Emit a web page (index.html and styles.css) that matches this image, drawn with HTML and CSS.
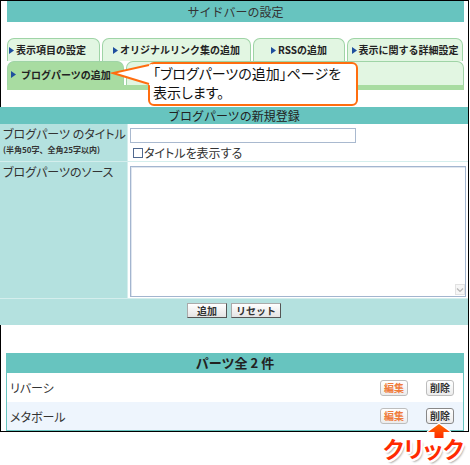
FILE: index.html
```html
<!DOCTYPE html>
<html lang="ja">
<head>
<meta charset="utf-8">
<title>サイドバーの設定</title>
<link rel="stylesheet" href="styles.css">
</head>
<body>
<div class="frame">
  <div class="top">
    <div class="hdr">サイドバーの設定</div>
    <div class="tabs">
      <div class="tabrow">
        <div class="tab w1"><svg class="tri" width="5" height="7" viewBox="0 0 5 7"><polygon points="0,0 5,3.5 0,7" fill="#1f4f9e"/></svg>表示項目の設定</div>
        <div class="tab w2"><svg class="tri" width="5" height="7" viewBox="0 0 5 7"><polygon points="0,0 5,3.5 0,7" fill="#1f4f9e"/></svg>オリジナルリンク集の追加</div>
        <div class="tab w3"><svg class="tri" width="5" height="7" viewBox="0 0 5 7"><polygon points="0,0 5,3.5 0,7" fill="#1f4f9e"/></svg>RSSの追加</div>
        <div class="tab w4"><svg class="tri" width="5" height="7" viewBox="0 0 5 7"><polygon points="0,0 5,3.5 0,7" fill="#1f4f9e"/></svg>表示に関する詳細設定</div>
      </div>
      <div class="tabrow row2">
        <div class="tab active"><svg class="tri wide" width="5" height="7" viewBox="0 0 5 7"><polygon points="0,0 5,3.5 0,7" fill="#1f4f9e"/></svg>ブログパーツの追加</div>
        <div class="tab fill"></div>
      </div>
      <div class="strip"></div>
    </div>
  </div>

  <div class="form">
    <div class="fhdr">ブログパーツの新規登録</div>
    <div class="fgrid">
      <div class="lbl">ブログパーツ のタイトル<div class="sub">(半角50字、全角25字以内)</div></div>
      <div class="val">
        <div class="inp"></div>
        <div class="chk"><span class="box"></span>タイトルを表示する</div>
      </div>
      <div class="lbl">ブログパーツのソース</div>
      <div class="val">
        <div class="ta"><div class="sc"><svg width="8" height="6" viewBox="0 0 8 6"><polyline points="1,1.5 4,4.5 7,1.5" fill="none" stroke="#b5b5b5" stroke-width="1.2"/></svg></div></div>
      </div>
    </div>
    <div class="btnrow">
      <div class="btn b1">追加</div>
      <div class="btn b2">リセット</div>
    </div>
  </div>

  <div class="parts">
    <div class="phdr">パーツ全 2 件</div>
    <div class="prow">
      <div class="name">リバーシ</div>
      <div class="sbtn edit">編集</div>
      <div class="sbtn">削除</div>
    </div>
    <div class="prow alt">
      <div class="name">メタボール</div>
      <div class="sbtn edit">編集</div>
      <div class="sbtn hot">削除</div>
    </div>
  </div>
</div>

<div class="callout">「ブログパーツの追加」ページを<br>表示します。</div>
<svg class="tail" width="44" height="30" viewBox="0 0 44 30">
  <polygon points="3,13 42,4 42,26" fill="#fff"/>
  <polyline points="39,5 3,13 39,24" fill="none" stroke="#ff6d0f" stroke-width="2" stroke-linejoin="miter"/>
</svg>

<svg class="arrow" width="26" height="18" viewBox="0 0 26 18">
  <defs>
    <linearGradient id="ag" x1="0" y1="0" x2="0" y2="1">
      <stop offset="0" stop-color="#ff6a00"/>
      <stop offset="1" stop-color="#ff2a00"/>
    </linearGradient>
  </defs>
  <polygon points="13,2 24,10 17.5,10 17.5,16 8.5,16 8.5,10 2,10" fill="url(#ag)" stroke="#fff" stroke-width="2.5" stroke-linejoin="round" paint-order="stroke"/>
</svg>
<div class="click">クリック</div>
</body>
</html>
```
FILE: styles.css
```css
body {
  margin: 0;
  width: 470px;
  height: 465px;
  position: relative;
  background: #fff;
  font-family: "Noto Sans CJK JP", "Noto Sans", sans-serif;
  color: #333;
}

.frame {
  width: 467px;
  height: 430px;
  border: 1px solid #000;
}

.top {
  padding: 0 4px 0 6px;
}

.hdr {
  height: 21px;
  line-height: 21px;
  background: #67c4bf;
  text-align: center;
  font-size: 12px;
  color: #333;
}

.tabs {
  margin-top: 16px;
}

.tabrow {
  display: flex;
  gap: 2px;
  height: 23px;
}

.tab {
  box-sizing: border-box;
  border: 1px solid #9fd4a6;
  border-bottom: none;
  border-radius: 7px 7px 0 0;
  background: #e2f6e2;
  display: flex;
  align-items: center;
  justify-content: center;
  font-size: 10px;
  font-weight: bold;
  line-height: 14px;
  color: #222;
  white-space: nowrap;
}

.tri {
  margin-right: 2px;
  flex: none;
}

.tri.wide {
  margin: 3px 5px 0 0;
}

.w1 {
  width: 93px;
  justify-content: flex-start;
  padding-left: 1px;
}

.w2 {
  width: 149px;
}

.w3 {
  width: 92px;
}

.w4 {
  width: 116px;
}

.row2 {
  height: 24px;
}

.active {
  width: 117px;
  background: #a8dca1;
  align-items: flex-start;
  justify-content: flex-start;
  padding: 6px 0 0 3px;
}

.fill {
  flex: 1;
}

.strip {
  height: 5px;
  background: #a8dca1;
}

.form {
  margin: 17px 0 0 -1px;
  width: 468px;
}

.fhdr {
  height: 17px;
  line-height: 17px;
  background: #67c4bf;
  text-align: center;
  font-size: 12px;
  color: #222;
}

.fgrid {
  display: grid;
  grid-template-columns: 127px 1fr;
  grid-template-rows: 37px 136px;
  gap: 1px;
  background: #d4eeed;
  border-bottom: 1px solid #d4eeed;
}

.lbl {
  background: #b4e1df;
  padding: 2px 0 0 3px;
  font-size: 12px;
  line-height: 16px;
  color: #333;
  font-feature-settings: "palt";
  white-space: nowrap;
}

.sub {
  font-size: 8px;
  font-weight: bold;
  line-height: 10px;
  margin-top: 3px;
  color: #333;
  font-feature-settings: normal;
}

.val {
  background: #fff;
  padding: 4px 1px 0 2px;
}

.inp {
  width: 226px;
  height: 15px;
  box-sizing: border-box;
  border: 1px solid #a9b9cf;
  background: #fff;
}

.chk {
  display: flex;
  align-items: center;
  margin: 3px 0 0 3px;
  font-size: 12px;
  line-height: 14px;
  color: #333;
  font-feature-settings: "palt";
}

.box {
  width: 10px;
  height: 10px;
  box-sizing: border-box;
  border: 1px solid #51698f;
  background: #fff;
  margin-right: 1px;
}

.ta {
  width: 336px;
  height: 131px;
  box-sizing: border-box;
  border: 1px solid #a3b5cf;
  box-shadow: inset 1px 1px 0 #dfe6ef;
  background: #fff;
  position: relative;
}

.sc {
  position: absolute;
  right: 0;
  bottom: 1px;
  width: 10px;
  height: 11px;
  box-sizing: border-box;
  border: 1px solid #e2e2e2;
  background: #f6f6f6;
  display: flex;
  align-items: center;
  justify-content: center;
}

.btnrow {
  height: 26px;
  box-sizing: border-box;
  padding-top: 4px;
  background: #b4e1df;
  display: flex;
  justify-content: center;
  align-items: flex-start;
  gap: 4px;
}

.btn {
  height: 15px;
  box-sizing: border-box;
  border: 1px solid #aaa;
  border-right-color: #555;
  border-bottom-color: #555;
  background: linear-gradient(#ffffff, #e4e4e4);
  font-size: 10px;
  font-weight: bold;
  line-height: 13px;
  text-align: center;
  color: #333;
}

.b1 {
  width: 40px;
}

.b2 {
  width: 50px;
}

.parts {
  margin: 28px 0 0 5px;
  width: 458px;
  box-sizing: border-box;
  border: 1px solid #67c4bf;
  border-top: none;
}

.phdr {
  height: 20px;
  line-height: 20px;
  background: #67c4bf;
  text-align: center;
  font-size: 13px;
  font-weight: bold;
  color: #222;
}

.prow {
  display: flex;
  align-items: center;
  height: 29px;
  padding: 0 9px 0 3px;
  font-size: 12px;
  color: #333;
  font-feature-settings: "palt";
}

.prow.alt {
  height: 28px;
  background: #eef5fd;
}

.name {
  flex: 1;
}

.sbtn {
  width: 28px;
  height: 16px;
  box-sizing: border-box;
  border: 1px solid #bdbdbd;
  border-radius: 3px;
  background: linear-gradient(#ffffff, #ececec);
  font-size: 10px;
  font-weight: bold;
  line-height: 14px;
  text-align: center;
  color: #333;
}

.sbtn.edit {
  color: #f07b3a;
  margin-right: 18px;
}

.sbtn.hot {
  border-color: #888;
}

.callout {
  position: absolute;
  left: 148px;
  top: 62px;
  width: 210px;
  height: 44px;
  box-sizing: border-box;
  border: 2px solid #ff6d0f;
  border-radius: 6px;
  background: #fff;
  padding-left: 3px;
  font-size: 14px;
  line-height: 19px;
  color: #111;
  font-feature-settings: "palt";
  white-space: nowrap;
}

.tail {
  position: absolute;
  left: 110px;
  top: 60px;
}

.arrow {
  position: absolute;
  left: 426px;
  top: 422px;
}

.click {
  position: absolute;
  left: 383px;
  top: 434px;
  font-size: 23px;
  font-weight: bold;
  line-height: 28px;
  letter-spacing: 0;
  color: #ff2a00;
  font-feature-settings: "palt";
  white-space: nowrap;
  text-shadow:
    -2px 0 0 #fff, 2px 0 0 #fff, 0 -2px 0 #fff, 0 2px 0 #fff,
    -1.5px -1.5px 0 #fff, 1.5px -1.5px 0 #fff, -1.5px 1.5px 0 #fff, 1.5px 1.5px 0 #fff,
    2px 3px 2px rgba(0, 0, 0, 0.35);
}
```
